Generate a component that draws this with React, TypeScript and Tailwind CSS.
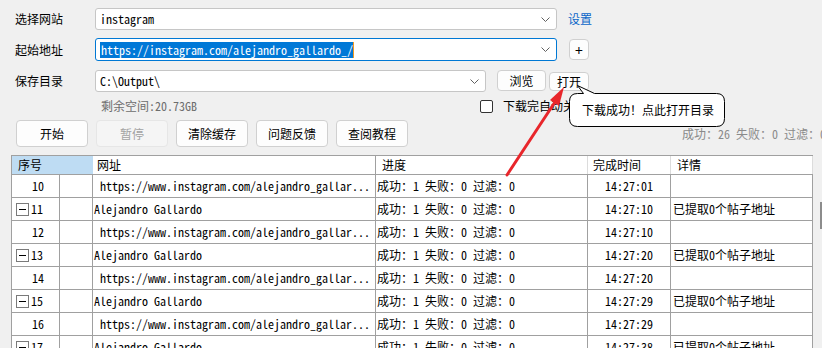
import React from "react";

const ui = "font-['Noto_Sans_CJK_SC',sans-serif]";
const mono = "font-['Noto_Sans_Mono_CJK_SC','Noto_Sans_CJK_SC',monospace]";

function Chevron() {
  return (
    <svg width="9" height="5" viewBox="0 0 9 5" className="shrink-0">
      <path d="M0.5 0.5 L4.5 4.5 L8.5 0.5" fill="none" stroke="#606060" strokeWidth="1" />
    </svg>
  );
}

function Combo({ w, children, focused = false }: { w: string; children: React.ReactNode; focused?: boolean }) {
  return (
    <div
      className={`${w} h-full flex items-center bg-white rounded-[3px] border pl-[4px] pr-[6px] ${
        focused ? "border-[#0078d4]" : "border-[#c6c6c6]"
      }`}
    >
      <div className={`flex-1 min-w-0 ${mono} text-[12px] leading-none text-black whitespace-nowrap`}>{children}</div>
      <Chevron />
    </div>
  );
}

function Btn({ children, w = "w-[72px]", h = "h-[27px]", disabled = false }: any) {
  return (
    <div
      className={`${w} ${h} shrink-0 flex items-center justify-center rounded-[4px] border ${ui} text-[12px] leading-none ${
        disabled ? "bg-[#f5f5f5] border-[#e6e6e6] text-[#a3a3a3]" : "bg-[#fdfdfd] border-[#d0d0d0] text-black"
      }`}
    >
      {children}
    </div>
  );
}

const rows = [
  { n: 10, tree: false, time: "14:27:01" },
  { n: 11, tree: true, time: "14:27:10" },
  { n: 12, tree: false, time: "14:27:10" },
  { n: 13, tree: true, time: "14:27:20" },
  { n: 14, tree: false, time: "14:27:20" },
  { n: 15, tree: true, time: "14:27:29" },
  { n: 16, tree: false, time: "14:27:29" },
  { n: 17, tree: true, time: "14:27:38" },
];

function MinusBox() {
  return (
    <div className="w-[13px] h-[13px] border border-[#7a7a7a] bg-white flex items-center justify-center shrink-0">
      <div className="w-[7px] h-[1px] bg-black" />
    </div>
  );
}

export default function App() {
  return (
    <div className={`w-[822px] h-[348px] bg-[#f0f0f0] relative overflow-hidden ${ui} text-black`}>
      <div className="pt-[8px] pl-[15px]">
        {/* 选择网站 */}
        <div className="flex items-center h-[22px]">
          <div className="w-[80px] text-[12px] leading-none">选择网站</div>
          <Combo w="w-[462px]">instagram</Combo>
          <div className="ml-[11px] text-[12px] leading-none text-[#0a66c8]">设置</div>
        </div>
        {/* 起始地址 */}
        <div className="flex items-center h-[23px] mt-[8px]">
          <div className="w-[80px] text-[12px] leading-none">起始地址</div>
          <Combo w="w-[462px]" focused>
            <span className="inline-flex items-center">
              <span className="bg-[#0078d7] text-white py-[2px] pl-[1px]">https://instagram.com/alejandro_gallardo_/</span>
              <span className="w-[1px] h-[16px] bg-[#f39a1e]" />
            </span>
          </Combo>
          <div className="ml-[12px] w-[20px] h-[21px] flex items-center justify-center bg-[#fdfdfd] border border-[#d0d0d0] rounded-[4px] text-[14px] leading-none">
            +
          </div>
        </div>
        {/* 保存目录 */}
        <div className="flex items-start h-[22px] mt-[9px]">
          <div className="w-[80px] h-full flex items-center text-[12px] leading-none">保存目录</div>
          <Combo w="w-[391px]">C:\Output\</Combo>
          <div className="ml-[11px]">
            <Btn w="w-[49px]" h="h-[21px]">浏览</Btn>
          </div>
          <div className="ml-[3px] mt-[2px]">
            <Btn w="w-[40px]" h="h-[19px]">打开</Btn>
          </div>
        </div>
        {/* 剩余空间 */}
        <div className="flex items-center h-[14px] mt-[7px]">
          <div className={`ml-[86px] w-[379px] ${mono} text-[12px] leading-none text-[#6d6d6d] whitespace-nowrap`}>
            剩余空间:20.73GB
          </div>
          <div className="w-[13px] h-[13px] border border-[#333] rounded-[2px] bg-white" />
          <div className="ml-[10px] text-[12px] leading-none whitespace-nowrap">下载完自动关闭</div>
        </div>
      </div>

      {/* 按钮 */}
      <div className="flex items-center mt-[7px] pl-[16px] h-[27px]">
        <div className="flex gap-[8px]">
          <Btn>开始</Btn>
          <Btn disabled>暂停</Btn>
          <Btn>清除缓存</Btn>
          <Btn>问题反馈</Btn>
          <Btn>查阅教程</Btn>
        </div>
        <div className={`ml-[274px] ${mono} text-[12px] leading-none text-[#8a8a8a] whitespace-nowrap`}>
          成功：26 失败：0 过滤：0
        </div>
      </div>

      {/* 表格 */}
      <div className="mt-[8px] ml-[11px] w-[802px] border-l border-t border-[#a0a0a0] bg-white">
        <div className="flex h-[18px] text-[12px] leading-none">
          <div className="w-[81px] bg-[#bedcf3] flex items-center pl-[6px]">序号</div>
          <div className="w-[283px] flex items-center pl-[4px] border-r border-[#a0a0a0]">网址</div>
          <div className="w-[212px] flex items-center pl-[6px] border-r border-[#dcdcdc]">进度</div>
          <div className="w-[83px] flex items-center pl-[5px] border-r border-[#dcdcdc]">完成时间</div>
          <div className="w-[142px] flex items-center pl-[6px] border-r border-[#dcdcdc]">详情</div>
        </div>
        {rows.map((r) => (
          <div key={r.n} className={`flex h-[23px] border-t border-[#a0a0a0] ${mono} text-[12px] leading-none`}>
            <div className={`w-[48px] border-r border-[#a0a0a0] flex items-center ${r.tree ? "pl-[4px]" : "pl-[20px]"}`}>
              {r.tree && <MinusBox />}
              <span className={r.tree ? "ml-[2px]" : ""}>{r.n}</span>
            </div>
            <div className="w-[33px] border-r border-[#a0a0a0]" />
            <div className={`w-[283px] border-r border-[#a0a0a0] flex items-center whitespace-nowrap ${r.tree ? "pl-[1px]" : "pl-[7px]"}`}>
              {r.tree ? "Alejandro Gallardo" : "https://www.instagram.com/alejandro_gallar..."}
            </div>
            <div className="w-[212px] border-r border-[#a0a0a0] flex items-center pl-[1px] whitespace-nowrap">
              成功：1 失败：0 过滤：0
            </div>
            <div className="w-[83px] border-r border-[#a0a0a0] flex items-center justify-center">{r.time}</div>
            <div className="w-[142px] border-r border-[#a0a0a0] flex items-center pl-[2px] whitespace-nowrap">
              {r.tree ? "已提取0个帖子地址" : ""}
            </div>
          </div>
        ))}
      </div>

      {/* scrollbar edge */}
      <div className="absolute left-[820px] top-[202px] w-[2px] h-[27px] bg-[#8c8c8c]" />

      {/* tooltip balloon */}
      <svg className="absolute left-0 top-0 pointer-events-none" width="822" height="348">
        <path
          d="M577.5 85.5 L594.5 93.5 L716.5 93.5 Q724.5 93.5 724.5 101.5 L724.5 118.5 Q724.5 126.5 716.5 126.5 L577.5 126.5 Q569.5 126.5 569.5 118.5 L569.5 101.5 Q569.5 93.5 577.5 93.5 L583.5 93.5 Z"
          fill="white"
          stroke="black"
          strokeWidth="1"
        />
      </svg>
      <div className="absolute left-[582px] top-[101px] text-[12px] leading-[18px] text-black whitespace-nowrap">
        下载成功！点此打开目录
      </div>

      {/* red arrow */}
      <svg className="absolute left-0 top-0 pointer-events-none" width="822" height="348">
        <line x1="507" y1="175" x2="555" y2="102" stroke="#e8262b" strokeWidth="3" strokeLinecap="round" />
        <polygon points="564,87 559,106 550,100" fill="#e8262b" />
      </svg>
    </div>
  );
}
